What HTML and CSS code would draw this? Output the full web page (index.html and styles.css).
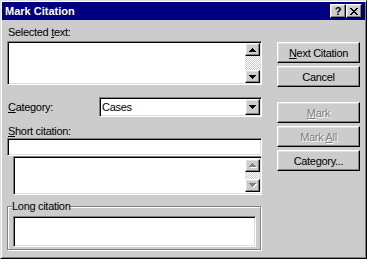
FILE: index.html
```html
<!DOCTYPE html>
<html lang="en">
  <head>
    <meta charset="UTF-8" />
    <title>Mark Citation</title>
    <link rel="stylesheet" href="styles.css">
  </head>
  <body>
    <div class="window">
      <header class="titlebar">
        <span class="title">Mark Citation</span>
        <div class="title-buttons">
          <button class="tb-btn help">?</button>
          <button class="tb-btn close" aria-label="Close">
            <svg width="8" height="7" viewBox="0 0 8 7">
              <path d="M0 0h2v1h-2z M6 0h2v1h-2z M1 1h2v1h-2z M5 1h2v1h-2z M2 2h4v1h-4z M3 3h2v1h-2z M2 4h4v1h-4z M1 5h2v1h-2z M5 5h2v1h-2z M0 6h2v1h-2z M6 6h2v1h-2z" />
            </svg>
          </button>
        </div>
      </header>

      <div class="dialog-body">
        <div class="main">
          <label class="label label-selected">Selected <u>t</u>ext:</label>
          <div class="field field-selected">
            <div class="scrollbar">
              <div class="sb-btn">
                <svg width="7" height="4" viewBox="0 0 7 4"><path d="M3 0h1v1h-1z M2 1h3v1h-3z M1 2h5v1h-5z M0 3h7v1h-7z" /></svg>
              </div>
              <div class="sb-track"></div>
              <div class="sb-btn">
                <svg width="7" height="4" viewBox="0 0 7 4"><path d="M0 0h7v1h-7z M1 1h5v1h-5z M2 2h3v1h-3z M3 3h1v1h-1z" /></svg>
              </div>
            </div>
          </div>

          <div class="category-row">
            <label class="label category-label"><u>C</u>ategory:</label>
            <div class="field combo">
              <span class="combo-value">Cases</span>
              <div class="sb-btn combo-btn">
                <svg width="7" height="4" viewBox="0 0 7 4"><path d="M0 0h7v1h-7z M1 1h5v1h-5z M2 2h3v1h-3z M3 3h1v1h-1z" /></svg>
              </div>
            </div>
          </div>

          <label class="label label-short"><u>S</u>hort citation:</label>
          <div class="field short-edit"></div>
          <div class="field short-list">
            <div class="scrollbar">
              <div class="sb-btn disabled">
                <svg width="8" height="5" viewBox="0 0 8 5"><path class="hi" d="M4 1h1v1h-1z M3 2h3v1h-3z M2 3h5v1h-5z M1 4h7v1h-7z" /><path d="M3 0h1v1h-1z M2 1h3v1h-3z M1 2h5v1h-5z M0 3h7v1h-7z" /></svg>
              </div>
              <div class="sb-track"></div>
              <div class="sb-btn disabled">
                <svg width="8" height="5" viewBox="0 0 8 5"><path class="hi" d="M1 1h7v1h-7z M2 2h5v1h-5z M3 3h3v1h-3z M4 4h1v1h-1z" /><path d="M0 0h7v1h-7z M1 1h5v1h-5z M2 2h3v1h-3z M3 3h1v1h-1z" /></svg>
              </div>
            </div>
          </div>

          <fieldset class="group">
            <legend>Long citation</legend>
            <div class="field long-edit"></div>
          </fieldset>
        </div>

        <div class="actions">
          <button class="btn"><u>N</u>ext Citation</button>
          <button class="btn">Cancel</button>
          <button class="btn btn-split" disabled><u>M</u>ark</button>
          <button class="btn" disabled>Mark <u>A</u>ll</button>
          <button class="btn">Cate<u>g</u>ory...</button>
        </div>
      </div>
    </div>
  </body>
</html>
```
FILE: styles.css
```css
*,
*::before,
*::after {
  box-sizing: border-box;
}
:root {
  --face: #cccccc;
  --shadow: #808080;
  --light: #dfdfdf;
  --navy: #000080;
  --ff-base: "Liberation Sans", Arial, sans-serif;
}
body {
  margin: 0;
  font-family: var(--ff-base);
  font-size: 11px;
  letter-spacing: -0.3px;
  color: #000;
  background-color: var(--face);
}
button {
  font: inherit;
  letter-spacing: inherit;
  color: inherit;
  margin: 0;
  padding: 0;
}

/* window frame */
.window {
  width: 367px;
  height: 259px;
  display: flex;
  flex-direction: column;
  padding: 1px;
  border: 1px solid;
  border-color: var(--light) #000 #000 var(--light);
  box-shadow: inset 1px 1px #fff, inset -1px -1px var(--shadow);
}
.titlebar {
  height: 18px;
  display: flex;
  align-items: center;
  justify-content: space-between;
  padding: 0 3px;
  background-color: var(--navy);
  color: #fff;
  font-weight: bold;
  letter-spacing: 0;
}
.title-buttons {
  display: flex;
}
.tb-btn {
  width: 16px;
  height: 14px;
  display: flex;
  align-items: center;
  justify-content: center;
  color: #000;
  font-weight: bold;
  line-height: 1;
}

/* raised 3d look */
.tb-btn,
.btn,
.sb-btn {
  background-color: var(--face);
  border: 1px solid;
  border-color: #fff #000 #000 #fff;
  box-shadow: inset -1px -1px var(--shadow), inset 1px 1px var(--light);
}

/* sunken field */
.field {
  background-color: #fff;
  border: 1px solid;
  border-color: var(--shadow) #fff #fff var(--shadow);
  box-shadow: inset 1px 1px #000, inset -1px -1px var(--light);
}

.dialog-body {
  flex: 1;
  display: flex;
  gap: 15px;
  padding: 0 5px;
}
.main {
  width: 255px;
  display: flex;
  flex-direction: column;
}
.label {
  display: block;
  height: 13px;
  line-height: 13px;
  padding-left: 1px;
}
.label-selected {
  margin-top: 6px;
}
.field-selected {
  margin-top: 2px;
  height: 44px;
  display: flex;
  justify-content: flex-end;
  padding: 1px;
}
.scrollbar {
  width: 15px;
  display: flex;
  flex-direction: column;
}
.sb-btn {
  height: 13px;
  display: flex;
  align-items: center;
  justify-content: center;
}
.sb-btn svg {
  fill: #000;
}
.sb-btn.disabled svg {
  fill: var(--shadow);
}
.sb-btn.disabled .hi {
  fill: #fff;
}
.sb-track {
  flex: 1;
  background: repeating-conic-gradient(#fff 0 25%, var(--face) 0 50%) 0 0 / 2px 2px;
}

.category-row {
  margin-top: 12px;
  display: flex;
  align-items: center;
}
.category-label {
  width: 92px;
}
.combo {
  flex: 1;
  height: 20px;
  display: flex;
  align-items: center;
  justify-content: space-between;
  padding: 2px 1px 2px 2px;
}
.combo-btn {
  width: 15px;
  height: 16px;
}

.label-short {
  margin-top: 8px;
}
.short-edit {
  height: 18px;
}
.short-list {
  height: 39px;
  margin-left: 6px;
  display: flex;
  justify-content: flex-end;
  padding: 2px 1px 2px 2px;
}

.group {
  margin: 5px 1px 0 0;
  padding: 0 4px 2px 5px;
  border: 1px solid var(--shadow);
  box-shadow: inset 1px 1px #fff, 1px 1px #fff;
}
.group legend {
  padding: 0;
  margin-left: -1px;
  line-height: 13px;
  background-color: var(--face);
}
.long-edit {
  margin-top: 3px;
  height: 31px;
}

.actions {
  width: 83px;
  display: flex;
  flex-direction: column;
  gap: 3px;
  padding-top: 22px;
}
.btn {
  height: 21px;
  text-align: center;
}
.btn:disabled {
  color: var(--shadow);
  text-shadow: 1px 1px #fff;
}
.btn-split {
  margin-top: 12px;
}
```
